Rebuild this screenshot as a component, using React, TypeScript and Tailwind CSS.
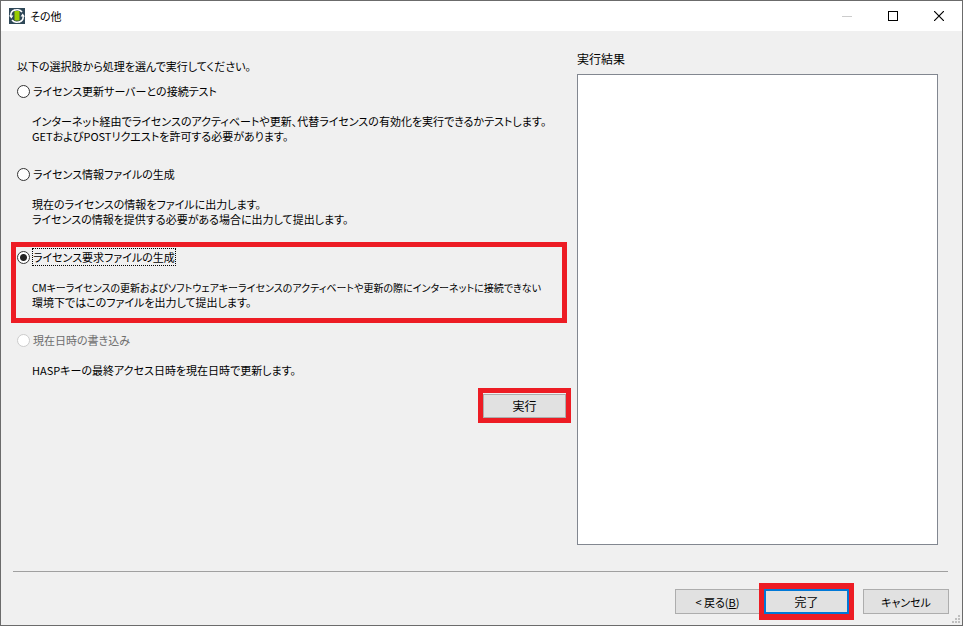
import { useState } from "react";

type Option = {
  id: string;
  label: string;
  lines: { text: string; small?: boolean }[];
  disabled?: boolean;
  highlighted?: boolean;
};

const options: Option[] = [
  {
    id: "connection",
    label: "ライセンス更新サーバーとの接続テスト",
    lines: [
      { text: "インターネット経由でライセンスのアクティベートや更新、代替ライセンスの有効化を実行できるかテストします。" },
      { text: "GETおよびPOSTリクエストを許可する必要があります。" },
    ],
  },
  {
    id: "info",
    label: "ライセンス情報ファイルの生成",
    lines: [
      { text: "現在のライセンスの情報をファイルに出力します。" },
      { text: "ライセンスの情報を提供する必要がある場合に出力して提出します。" },
    ],
  },
  {
    id: "request",
    label: "ライセンス要求ファイルの生成",
    lines: [
      {
        text: "CMキーライセンスの更新およびソフトウェアキーライセンスのアクティベートや更新の際にインターネットに接続できない",
        small: true,
      },
      { text: "環境下ではこのファイルを出力して提出します。" },
    ],
    highlighted: true,
  },
  {
    id: "datetime",
    label: "現在日時の書き込み",
    lines: [{ text: "HASPキーの最終アクセス日時を現在日時で更新します。" }],
    disabled: true,
  },
];

function AppIcon() {
  return (
    <svg width="16" height="16" viewBox="0 0 16 16" aria-hidden="true">
      <rect width="16" height="16" fill="#2f4858" />
      <path d="M6 2C3 2.600 1.600 5 1.800 8" fill="none" stroke="#fff" strokeWidth="1.500" />
      <path d="M0 7.500h4.400L2.400 10.500z" fill="#fff" />
      <path d="M3 12c2 2.600 6 3 8.500 1.200" fill="none" stroke="#fff" strokeWidth="1.500" />
      <path d="M10 14c3-.6 4.400-3 4.200-6" fill="none" stroke="#fff" strokeWidth="1.500" />
      <path d="M11.600 8.500H16L13.600 5.500z" fill="#fff" />
      <path d="M13 4C11 1.400 7 1 4.500 2.800" fill="none" stroke="#fff" strokeWidth="1.500" />
      <rect x="5" y="3" width="6" height="10" fill="#2f4858" />
      <rect x="5.500" y="3" width="5" height="9.500" fill="#99cc00" />
    </svg>
  );
}

function OptionRow({ option, checked, onSelect }: { option: Option; checked: boolean; onSelect: () => void }) {
  return (
    <div className={`mr-1 border-5 pt-[2px] pb-2 ${option.highlighted ? "border-[#ed1c24]" : "border-transparent"}`}>
      <div className="flex h-4 items-center">
        <input
          type="radio"
          name="operation"
          id={option.id}
          checked={checked}
          disabled={option.disabled}
          onChange={onSelect}
          className="ml-px size-[13px] shrink-0 appearance-none rounded-full border border-[#333] bg-white checked:bg-[radial-gradient(circle,#222_0_3px,#fff_4px)] disabled:border-[#ccc]"
        />
        <label
          htmlFor={option.id}
          className={`ml-[2px] border border-dotted leading-4 whitespace-nowrap ${checked ? "border-black" : "border-transparent"} ${option.disabled ? "text-[#6d6d6d]" : ""}`}
        >
          {option.label}
        </label>
      </div>
      <p className="mt-[15px] ml-4 leading-[15px] whitespace-nowrap">
        {option.lines.map((line) => (
          <span key={line.text} className={`block ${line.small ? "text-[10px]" : ""}`}>
            {line.text}
          </span>
        ))}
      </p>
    </div>
  );
}

export default function App() {
  const [selected, setSelected] = useState("request");
  return (
    <div className="flex min-h-screen flex-col border border-[#6b6b6b] bg-[#f0f0f0] font-['Noto_Sans_CJK_JP',sans-serif] text-[11px] text-black [font-feature-settings:'palt']">
      <header className="flex h-[30px] items-center bg-white pl-2">
        <AppIcon />
        <h1 className="ml-[5px]">その他</h1>
        <div className="ml-auto flex h-full">
          <button aria-label="最小化" disabled className="flex w-[46px] items-center justify-center">
            <svg width="10" height="10" viewBox="0 0 10 10"><path d="M0 5.500h10" stroke="#ccc" /></svg>
          </button>
          <button aria-label="最大化" className="flex w-[46px] items-center justify-center">
            <svg width="10" height="10" viewBox="0 0 10 10"><rect x=".5" y=".5" width="9" height="9" fill="none" stroke="#000" /></svg>
          </button>
          <button aria-label="閉じる" className="flex w-[46px] items-center justify-center">
            <svg width="10" height="10" viewBox="0 0 10 10"><path d="M0 0l10 10M10 0L0 10" stroke="#000" strokeWidth="1.200" /></svg>
          </button>
        </div>
      </header>

      <main className="flex grow gap-[6px] pr-6 pl-[10px]">
        <section className="flex w-[560px] shrink-0 flex-col pt-[27px]">
          <h2 className="ml-[6px] leading-4">以下の選択肢から処理を選んで実行してください。</h2>
          <div className="mt-[2px] flex flex-col gap-[2px]">
            {options.map((option) => (
              <OptionRow
                key={option.id}
                option={option}
                checked={selected === option.id}
                onSelect={() => setSelected(option.id)}
              />
            ))}
          </div>
          <div className="-mt-[3px] self-end border-5 border-[#ed1c24] pt-px">
            <button className="block h-6 w-[83px] border border-[#adadad] bg-[#e1e1e1] text-[12px] leading-5">実行</button>
          </div>
        </section>
        <section className="flex grow flex-col pt-5">
          <label htmlFor="result" className="text-[12px] leading-4">実行結果</label>
          <textarea id="result" readOnly className="mt-[7px] grow resize-none border border-[#828790] bg-white p-1" />
        </section>
      </main>

      <footer className="relative mt-[26px] pb-[5px]">
        <hr className="mr-[14px] ml-3 border-[#a0a0a0]" />
        <div className="mt-[11px] flex items-center justify-end pr-[13px]">
          <button className="h-[25px] w-[84px] border border-r-0 border-[#adadad] bg-[#e1e1e1] leading-5">
            &lt; 戻る(<u>B</u>)
          </button>
          <div className="border-x-5 border-y-6 border-[#ed1c24]">
            <button className="block h-[25px] w-[85px] border-2 border-[#0078d7] bg-[#e1e1e1] text-[12px] leading-5">完了</button>
          </div>
          <button className="ml-[9px] h-[25px] w-[86px] border border-[#adadad] bg-[#e1e1e1] leading-5">キャンセル</button>
        </div>
        <svg className="absolute right-[2px] bottom-[2px]" width="8" height="8" viewBox="0 0 8 8" fill="#bfbfbf" aria-hidden="true">
          <path d="M6 0h2v2H6zM3 3h2v2H3zM6 3h2v2H6zM0 6h2v2H0zM3 6h2v2H3zM6 6h2v2H6z" />
        </svg>
      </footer>
    </div>
  );
}
